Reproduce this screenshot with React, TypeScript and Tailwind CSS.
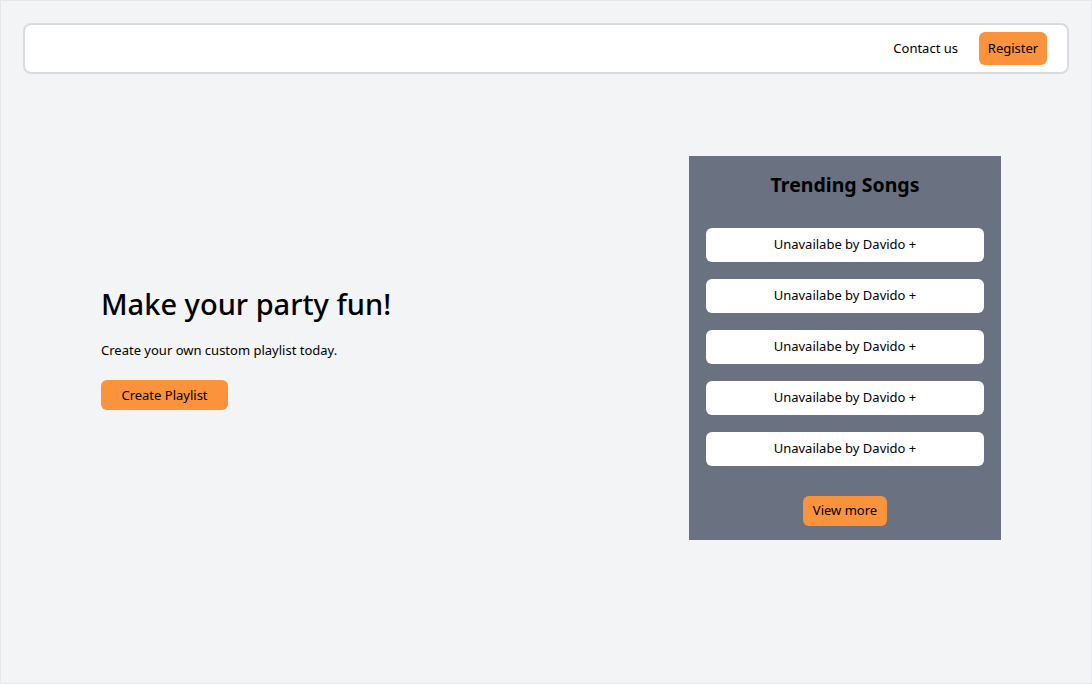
import { JSX } from 'react';

const songs = ['Unavailabe by Davido +', 'Unavailabe by Davido +', 'Unavailabe by Davido +', 'Unavailabe by Davido +', 'Unavailabe by Davido +'];

const App = (): JSX.Element => {
	return (
		<div
			className="h-[684px] w-full border border-gray-200 bg-gray-100 text-black overflow-hidden"
			style={{ fontFamily: '"Segoe UI", "Noto Sans", sans-serif' }}
		>
			<div className="px-[22px] pt-[22px]">
				<nav className="flex items-center justify-end h-[51px] bg-white border-2 border-[#d8dbe0] rounded-lg pr-[20px]">
					<a className="text-[13px] mr-[21px]">Contact us</a>
					<button className="bg-[#fb923c] text-[13px] rounded-md h-[33px] w-[68px]">Register</button>
				</nav>
			</div>
			<div className="flex items-center justify-between pl-[100px] pr-[90px] mt-[82px]">
				<div className="flex flex-col">
					<h1 className="text-[29px] font-medium leading-9">Make your party fun!</h1>
					<p className="text-[13px] mt-[19px]">Create your own custom playlist today.</p>
					<button className="bg-[#fb923c] text-[13px] rounded-md h-[30px] w-[127px] mt-[20px]">Create Playlist</button>
				</div>
				<div className="w-[312px] h-[384px] bg-gray-500 flex flex-col items-center px-[17px] pt-[15px]">
					<h2 className="text-[19.5px] font-bold leading-7">Trending Songs</h2>
					<div className="flex flex-col gap-[17px] w-full mt-[29px]">
						{songs.map((s, i) => (
							<div key={i} className="bg-white rounded-md h-[34px] flex items-center justify-center text-[13px]">
								{s}
							</div>
						))}
					</div>
					<button className="bg-[#fb923c] text-[13px] rounded-md h-[30px] w-[84px] mt-[30px]">View more</button>
				</div>
			</div>
		</div>
	);
};

export default App;
